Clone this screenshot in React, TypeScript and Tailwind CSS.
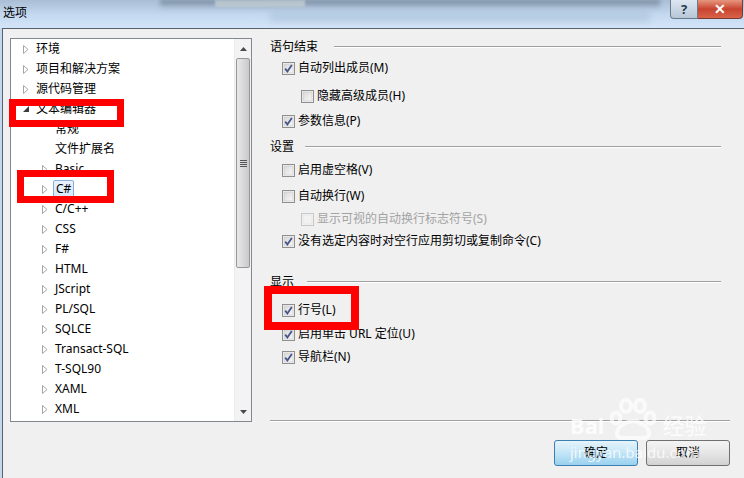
import { ReactNode } from "react";

const font = "font-['Noto_Sans','Noto_Sans_CJK_SC',sans-serif]";

type TreeItem = {
  label: string;
  level: 0 | 1;
  arrow: "closed" | "open" | "none";
  selected?: boolean;
};

const treeItems: TreeItem[] = [
  { label: "环境", level: 0, arrow: "closed" },
  { label: "项目和解决方案", level: 0, arrow: "closed" },
  { label: "源代码管理", level: 0, arrow: "closed" },
  { label: "文本编辑器", level: 0, arrow: "open" },
  { label: "常规", level: 1, arrow: "none" },
  { label: "文件扩展名", level: 1, arrow: "none" },
  { label: "Basic", level: 1, arrow: "closed" },
  { label: "C#", level: 1, arrow: "closed", selected: true },
  { label: "C/C++", level: 1, arrow: "closed" },
  { label: "CSS", level: 1, arrow: "closed" },
  { label: "F#", level: 1, arrow: "closed" },
  { label: "HTML", level: 1, arrow: "closed" },
  { label: "JScript", level: 1, arrow: "closed" },
  { label: "PL/SQL", level: 1, arrow: "closed" },
  { label: "SQLCE", level: 1, arrow: "closed" },
  { label: "Transact-SQL", level: 1, arrow: "closed" },
  { label: "T-SQL90", level: 1, arrow: "closed" },
  { label: "XAML", level: 1, arrow: "closed" },
  { label: "XML", level: 1, arrow: "closed" },
];

const Arrow = ({ kind }: { kind: TreeItem["arrow"] }) => {
  if (kind === "none") return <span className="w-[6px]" />;
  if (kind === "open")
    return (
      <svg width="6" height="6" viewBox="0 0 6 6">
        <path d="M6 0 L6 6 L0 6 Z" fill="#3c3c3c" />
      </svg>
    );
  return (
    <svg width="6" height="9" viewBox="0 0 6 9">
      <path d="M0.5 0.5 L5 4.5 L0.5 8.5 Z" fill="#fff" stroke="#a6a6a6" />
    </svg>
  );
};

const Check = ({ checked, disabled }: { checked?: boolean; disabled?: boolean }) => (
  <svg width="13" height="13" viewBox="0 0 13 13" className="shrink-0">
    <defs>
      <linearGradient id="cbg" x1="0" y1="0" x2="1" y2="1">
        <stop offset="0" stopColor="#d8d8d8" />
        <stop offset="1" stopColor="#f8f8f8" />
      </linearGradient>
    </defs>
    <rect x="0.5" y="0.5" width="12" height="12" fill={disabled ? "#f4f4f4" : "#f6f6f6"} stroke={disabled ? "#c8c8c8" : "#8f8f8f"} />
    <rect x="2" y="2" width="9" height="9" fill={disabled ? "#f2f2f2" : "url(#cbg)"} stroke={disabled ? "#e0e0e0" : "#c4c4c4"} strokeWidth="0.6" />
    {checked && (
      <path d="M3.2 6.6 L5.4 9.4 L9.8 3" fill="none" stroke="#45558a" strokeWidth="1.8" />
    )}
  </svg>
);

const Header = ({ text, gap, className }: { text: string; gap: string; className: string }) => (
  <div className={`h-[20px] flex items-center ${className}`}>
    <span>{text}</span>
    <div className={`flex-1 h-[2px] border-t border-[#a0a0a0] border-b border-b-white ${gap}`} />
  </div>
);

const Option = ({
  label,
  checked,
  disabled,
  indent,
  className,
}: {
  label: ReactNode;
  checked?: boolean;
  disabled?: boolean;
  indent?: boolean;
  className: string;
}) => (
  <div className={`h-[20px] flex items-center gap-[3px] ${indent ? "pl-[31px]" : "pl-[12px]"} ${className}`}>
    <Check checked={checked} disabled={disabled} />
    <span className={disabled ? "text-[#a3a3a3]" : "text-black"}>{label}</span>
  </div>
);

const Paw = () => (
  <svg width="54" height="44" viewBox="0 0 54 44">
    <g fill="none" stroke="#ffffff" strokeWidth="4" opacity="0.85">
      <ellipse cx="20" cy="8" rx="5" ry="6" />
      <ellipse cx="34" cy="8" rx="5" ry="6" />
      <ellipse cx="10" cy="20" rx="4.5" ry="5.5" />
      <ellipse cx="44" cy="20" rx="4.5" ry="5.5" />
      <path d="M16 40 C8 40 10 30 18 26 C24 22 30 22 36 26 C44 30 46 40 38 40 Z" />
    </g>
  </svg>
);

export default function App() {
  return (
    <div className={`relative w-[744px] h-[478px] overflow-hidden bg-[#c4d9ef] text-[12px] leading-none text-black ${font}`}>
      {/* title bar */}
      <div className="relative h-[28px] bg-gradient-to-b from-[#a9bed5] via-[#c3d8ef] to-[#d3e5f8] flex items-start">
        <div className="absolute left-[160px] top-0 w-[500px] h-[10px] bg-gradient-to-b from-[#4d5d70]/70 via-[#7d8fa3]/40 to-transparent blur-[2px]" />
        <div className="absolute left-[215px] top-0 w-[90px] h-[7px] bg-[#c9d3d5]/70 blur-[1px]" />
        <div className="absolute left-[270px] top-[12px] w-[380px] h-[10px] bg-[#9db3cc]/40 blur-[3px]" />
        <span className="relative pl-[3px] pt-[7px] text-[12px]">选项</span>
        <div className="relative ml-auto flex mr-[1px]">
          <div className="w-[28px] h-[19px] rounded-bl-[4px] border border-t-0 border-[#6b7b8e] bg-gradient-to-b from-[#dde7f1] to-[#b7c6d6] flex items-center justify-center text-[13px] font-bold text-[#2a3a4c]">
            ?
          </div>
          <div className="w-[45px] h-[19px] rounded-br-[4px] border border-t-0 border-l-0 border-[#7a3a32] bg-gradient-to-b from-[#e69580] via-[#c8432e] to-[#d8644a] flex items-center justify-center text-[14px] font-bold text-white">
            ✕
          </div>
        </div>
      </div>

      {/* dialog body */}
      <div className="ml-[2px] h-[450px] bg-[#f0f0f0] border-l border-t border-[#57606b] flex items-start">
        {/* tree */}
        <div className="ml-[7px] mt-[9px] w-[242px] h-[384px] bg-white border border-[#828790] flex">
          <div className="flex-1 flex flex-col">
            {treeItems.map((it) => (
              <div
                key={it.label}
                className={`h-[20px] flex items-center ${it.level === 0 ? "pl-[12px]" : "pl-[31px]"}`}
              >
                <span className="w-[6px] flex justify-center">
                  <Arrow kind={it.arrow} />
                </span>
                <span
                  className={
                    it.selected
                      ? "ml-[5px] bg-gradient-to-b from-[#eaf3fd] to-[#d6e8fb] border border-[#84acdd] rounded-[2px] px-[2px] py-[2px]"
                      : "ml-[6px] px-[1px] py-[1px]"
                  }
                >
                  {it.label}
                </span>
              </div>
            ))}
          </div>
          {/* scrollbar */}
          <div className="w-[17px] flex flex-col bg-[#f3f3f3] border-l border-[#ececec]">
            <div className="h-[19px] flex items-center justify-center">
              <svg width="7" height="4" viewBox="0 0 7 4">
                <path d="M0 4 L3.5 0 L7 4 Z" fill="#4a4a4a" />
              </svg>
            </div>
            <div className="mx-[1px] h-[210px] rounded-[2px] border border-[#979797] bg-gradient-to-r from-[#e9e9e9] via-[#d9d9d9] to-[#c9c9c9] flex items-center justify-center">
              <div className="flex flex-col gap-[1px]">
                <div className="w-[7px] h-[1px] bg-[#555]" />
                <div className="w-[7px] h-[1px] bg-[#555]" />
                <div className="w-[7px] h-[1px] bg-[#555]" />
                <div className="w-[7px] h-[1px] bg-[#555]" />
              </div>
            </div>
            <div className="flex-1" />
            <div className="h-[19px] flex items-center justify-center">
              <svg width="7" height="4" viewBox="0 0 7 4">
                <path d="M0 0 L3.5 4 L7 0 Z" fill="#4a4a4a" />
              </svg>
            </div>
          </div>
        </div>

        {/* options */}
        <div className="ml-[18px] w-[460px] pt-[8px] flex flex-col">
          <Header text="语句结束" gap="ml-[16px] mr-[9px]" className="" />
          <Option label="自动列出成员(M)" checked className="mt-[1px]" />
          <Option label="隐藏高级成员(H)" indent className="mt-[8px]" />
          <Option label="参数信息(P)" checked className="mt-[5px]" />
          <Header text="设置" gap="ml-[11px] mr-[9px]" className="mt-[6px]" />
          <Option label="启用虚空格(V)" className="mt-[3px]" />
          <Option label="自动换行(W)" className="mt-[6px]" />
          <Option label="显示可视的自动换行标志符号(S)" indent disabled className="mt-[3px]" />
          <Option label="没有选定内容时对空行应用剪切或复制命令(C)" checked className="mt-[2px]" />
          <Header text="显示" gap="ml-[13px] mr-[9px]" className="mt-[21px]" />
          <Option label="行号(L)" checked className="mt-[8px]" />
          <Option label="启用单击 URL 定位(U)" checked className="mt-[4px]" />
          <Option label="导航栏(N)" checked className="mt-[3px]" />
          <div className="mt-[53px] h-[2px] border-t border-[#a0a0a0] border-b border-b-white" />
          <div className="mt-[18px] flex justify-end gap-[8px]">
            <button className="w-[84px] h-[26px] rounded-[3px] border border-[#3c7fb1] bg-gradient-to-b from-[#e5f4fc] via-[#c4e5f6] to-[#98d1ef] text-black">
              确定
            </button>
            <button className="w-[84px] h-[26px] rounded-[3px] border border-[#707070] bg-gradient-to-b from-[#f4f4f4] via-[#e6e6e6] to-[#d2d2d2] text-black">
              取消
            </button>
          </div>
        </div>
      </div>

      {/* Baidu watermark */}
      <div className="absolute left-[570px] top-[398px] flex items-end gap-[2px] text-white opacity-80 pointer-events-none">
        <span className="text-[22px] font-bold leading-none mb-[6px]">Bai</span>
        <Paw />
        <span className="text-[22px] leading-none mb-[6px]">经验</span>
      </div>
      <div className="absolute left-[570px] top-[445px] text-[15px] text-white opacity-75 pointer-events-none">
        jingyan.baidu.com
      </div>

      {/* red annotation boxes */}
      <div className="absolute left-[9px] top-[99px] w-[115px] h-[28px] border-[7px] border-[#ff0000]" />
      <div className="absolute left-[17px] top-[170px] w-[97px] h-[33px] border-[7px] border-[#ff0000]" />
      <div className="absolute left-[264px] top-[286px] w-[95px] h-[44px] border-[8px] border-[#ff0000]" />
    </div>
  );
}
